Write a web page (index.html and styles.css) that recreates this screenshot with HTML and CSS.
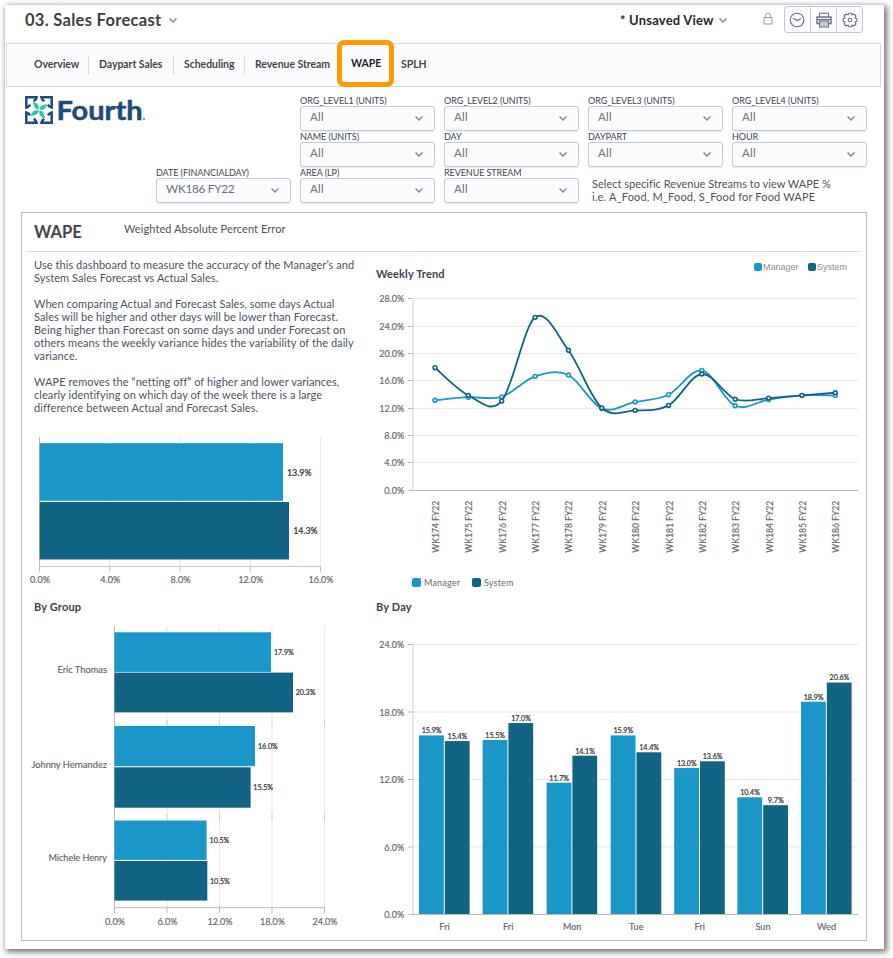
FILE: index.html
```html
<!DOCTYPE html>
<html lang="en">
<head>
<meta charset="utf-8">
<title>Sales Forecast - WAPE</title>
<link rel="stylesheet" href="styles.css">
</head>
<body>
<svg class="defs" width="0" height="0" aria-hidden="true">
  <symbol id="chev" viewBox="0 0 10 7"><path d="M1.5 1.5 5 5 8.5 1.5" fill="none" stroke="currentColor" stroke-width="1.5"/></symbol>
</svg>
<main class="window">
  <header class="topbar">
    <h1 class="title">03. Sales Forecast</h1>
    <svg class="chev title-chev"><use href="#chev"/></svg>
    <span class="view">* Unsaved View</span>
    <svg class="chev view-chev"><use href="#chev"/></svg>
    <svg class="lock" viewBox="0 0 10 13"><path d="M1 5.5H9V12H1ZM2.7 5.5V3.3A2.3 2.3 0 0 1 7.3 3.3V5.5" fill="none" stroke="#959ba3" stroke-width="1"/></svg>
    <div class="tools">
      <span class="tool"><svg viewBox="0 0 18 18"><circle cx="9" cy="9" r="6.8"/><path d="M4.8 7.2 9 9.6 13 7.4"/></svg></span>
      <span class="tool"><svg viewBox="0 0 18 18"><path d="M4.5 6V2.2H13.5V6"/><path d="M4.5 12.5H2V6H16V12.5H13.5M2 8.6H16" stroke-width="1.4"/><path d="M4.5 10H13.5V16H4.5Z" fill="#c3cad3"/></svg></span>
      <span class="tool"><svg viewBox="0 0 18 18"><path d="M7.6 2.2H10.4L11 4 13 3 15 5 14 7 15.9 7.7V10.3L14 11 15 13 13 15 11 14 10.4 15.8H7.6L7 14 5 15 3 13 4 11 2.1 10.3V7.7L4 7 3 5 5 3 7 4Z" stroke-linejoin="round"/><circle cx="9" cy="9" r="1.8"/></svg></span>
    </div>
  </header>

  <nav class="tabs">
    <a class="tab t1">Overview</a>
    <a class="tab t2">Daypart Sales</a>
    <a class="tab t3">Scheduling</a>
    <a class="tab t4">Revenue Stream</a>
    <a class="tab t5 active">WAPE</a>
    <a class="tab t6">SPLH</a>
  </nav>

  <section class="controls">
    <svg class="logo" viewBox="0 0 124 32" width="124" height="32">
      <g fill="none" stroke="#1d4b7d" stroke-width="2.5" stroke-linejoin="miter">
        <path id="corner" d="M10.800 7.200Q13.400 5 13.600 3.300H3.300V13.600Q5 13.400 7.200 10.800"/>
        <use href="#corner" transform="rotate(90 16 16)"/>
        <use href="#corner" transform="rotate(180 16 16)"/>
        <use href="#corner" transform="rotate(270 16 16)"/>
      </g>
      <g fill="#2cc5a4">
        <path id="leaf" d="M15.600 15.600C16.400 11.500 14.500 8.500 9.500 8C10.500 9.500 11 11 11.300 12.500C12 14.500 13.500 15.500 15.600 15.600Z"/>
        <use href="#leaf" transform="rotate(90 16 16)"/>
        <use href="#leaf" transform="rotate(180 16 16)"/>
        <use href="#leaf" transform="rotate(270 16 16)"/>
      </g>
      <text class="wordmark" x="33.500" y="25.500" textLength="86" lengthAdjust="spacingAndGlyphs">Fourth</text>
      <circle cx="121" cy="24.800" r=".9" fill="#1d4b7d"/>
    </svg>
    <div class="filters">
      <label class="filter date"><span>DATE (FINANCIALDAY)</span><b class="select">WK186 FY22<svg class="chev"><use href="#chev"/></svg></b></label>
      <label class="filter c2 r1"><span>ORG_LEVEL1 (UNITS)</span><b class="select">All<svg class="chev"><use href="#chev"/></svg></b></label>
      <label class="filter c3 r1"><span>ORG_LEVEL2 (UNITS)</span><b class="select">All<svg class="chev"><use href="#chev"/></svg></b></label>
      <label class="filter c4 r1"><span>ORG_LEVEL3 (UNITS)</span><b class="select">All<svg class="chev"><use href="#chev"/></svg></b></label>
      <label class="filter c5 r1"><span>ORG_LEVEL4 (UNITS)</span><b class="select">All<svg class="chev"><use href="#chev"/></svg></b></label>
      <label class="filter c2 r2"><span>NAME (UNITS)</span><b class="select">All<svg class="chev"><use href="#chev"/></svg></b></label>
      <label class="filter c3 r2"><span>DAY</span><b class="select">All<svg class="chev"><use href="#chev"/></svg></b></label>
      <label class="filter c4 r2"><span>DAYPART</span><b class="select">All<svg class="chev"><use href="#chev"/></svg></b></label>
      <label class="filter c5 r2"><span>HOUR</span><b class="select">All<svg class="chev"><use href="#chev"/></svg></b></label>
      <label class="filter c2 r3"><span>AREA (LP)</span><b class="select">All<svg class="chev"><use href="#chev"/></svg></b></label>
      <label class="filter c3 r3"><span>REVENUE STREAM</span><b class="select">All<svg class="chev"><use href="#chev"/></svg></b></label>
      <p class="hint">Select specific Revenue Streams to view WAPE %<br><span>i.e. A_Food, M_Food, S_Food for Food WAPE</span></p>
    </div>
  </section>

  <section class="panel">
    <header class="panel-head">
      <h2>WAPE</h2>
      <p>Weighted Absolute Percent Error</p>
    </header>
    <div class="columns">
      <div class="col-left">
        <p class="copy">Use this dashboard to measure the accuracy of the Manager’s and<br>System Sales Forecast vs Actual Sales.<br><br>When comparing Actual and Forecast Sales, some days Actual<br>Sales will be higher and other days will be lower than Forecast.<br>Being higher than Forecast on some days and under Forecast on<br>others means the weekly variance hides the variability of the daily<br>variance.<br><br>WAPE removes the “netting off” of higher and lower variances,<br>clearly identifying on which day of the week there is a large<br>difference between Actual and Forecast Sales.</p>
        <svg id="total" class="chart" viewBox="22 425 348 173" width="348" height="173"></svg>
        <h3>By Group</h3>
        <svg id="group" class="chart" viewBox="22 618 348 320" width="348" height="320"></svg>
      </div>
      <div class="col-right">
        <div class="trend-head">
          <h3>Weekly Trend</h3>
          <div class="legend top"><i class="m"></i><span>Manager</span><i class="s"></i><span>System</span></div>
        </div>
        <svg id="trend" class="chart" viewBox="370 288 496 284" width="496" height="284"></svg>
        <div class="legend bottom"><i class="m"></i><span>Manager</span><i class="s"></i><span>System</span></div>
        <h3>By Day</h3>
        <svg id="day" class="chart" viewBox="370 618 496 320" width="496" height="320"></svg>
      </div>
    </div>
  </section>
</main>
<script src="charts.js"></script>
</body>
</html>
```
FILE: styles.css
```css
* { box-sizing: border-box; }
body { margin: 0; background: #fff; font-family: Lato, "Liberation Sans", sans-serif; color: #4a545f; overflow: hidden; height: 958px; }
h1, h2, h3, p { margin: 0; }
.defs { position: absolute; }
.window { width: 879px; height: 944px; margin: 5px 0 0 5px; background: #fff; box-shadow: 2px 2px 6px 1px rgba(0,0,0,.55); display: flow-root; }
.topbar { height: 38px; display: flex; align-items: flex-start; padding: 0 21px 0 20px; }
.title { font-size: 16.500px; line-height: 20px; margin-top: 5px; width: 143px; font-weight: 700; letter-spacing: .3px; color: #3d4043; white-space: nowrap; }
.chev { width: 10px; height: 7px; color: #7d8b99; flex: none; }
.title-chev { margin-top: 12px; }
.view { margin-left: 442px; margin-top: 5px; width: 96px; font-size: 13px; line-height: 20px; font-weight: 700; letter-spacing: .2px; color: #24272b; white-space: nowrap; }
.view-chev { margin-top: 12px; margin-left: 2px; }
.lock { width: 10px; height: 13px; margin: 7px 0 0 35px; flex: none; }
.tools { display: flex; margin: 1px 0 0 auto; width: 79px; height: 27px; border: 1px solid #bccbdb; border-radius: 3px; background: #fcfcff; flex: none; }
.tool { flex: 1; display: flex; align-items: center; justify-content: center; border-left: 1px solid #c7d4e1; }
.tool:first-child { border-left: 0; }
.tool svg { width: 18px; height: 18px; fill: none; stroke: #67727f; stroke-width: 1.1; }
.tool:first-child svg { margin-left: -1px; }

.tabs { display: flex; align-items: center; height: 44px; margin: 0 3px 0 1px; padding-left: 18px; border: 1px solid #d0dae3; background: #fcfcff; }
.tab { height: 19px; line-height: 16px; padding-left: 10px; font-size: 10.500px; font-weight: 700; letter-spacing: -.05px; color: #41474e; white-space: nowrap; border-right: 1px solid #d3dde6; flex: none; }
.t1 { width: 64px; padding-left: 9px; }
.t2 { width: 85px; }
.t3 { width: 71px; }
.t4 { width: 92px; border: 0; }
.t5, .t6 { border: 0; }
.active { width: 57px; height: 47px; line-height: 37px; margin-top: -3px; border: 5px solid #ff9a05; border-radius: 7px; padding-left: 9px; color: #1f2328; }
.t6 { padding-left: 7px; }

.controls { display: flex; height: 124px; padding-left: 18px; }
.logo { margin: 7px 0 0 0; flex: none; overflow: visible; }
.wordmark { font: 700 26.500px Lato, sans-serif; fill: #1d4b7d; stroke: #1d4b7d; stroke-width: .5px; }
.filters { display: grid; grid-template-columns: repeat(5, 135px); grid-template-rows: repeat(3, 36px); column-gap: 9px; margin: 8px 0 0 9px; }
.filter { display: flex; flex-direction: column; font-size: 9px; line-height: 12px; color: #3f444a; }
.filter > span { height: 11px; white-space: nowrap; letter-spacing: -.07px; }
.date { grid-area: 3 / 1; }
.c2 { grid-column: 2; } .c3 { grid-column: 3; } .c4 { grid-column: 4; } .c5 { grid-column: 5; }
.r1 { grid-row: 1; } .r2 { grid-row: 2; } .r3 { grid-row: 3; }
.select { display: flex; justify-content: space-between; align-items: center; height: 25px; padding: 0 10px 3px 9px; font-size: 11.500px; font-weight: 400; letter-spacing: .3px; color: #65717e; border: 1px solid #bccddd; border-radius: 3px; background: #fcfcff; box-shadow: 0 1px 0 rgba(188,205,221,.35); }
.date .select { letter-spacing: -.3px; font-size: 11.800px; }
.select .chev { position: relative; top: 1px; }
.hint { grid-area: 3 / 4 / 4 / 6; padding: 10px 0 0 4px; font-size: 11px; line-height: 13px; letter-spacing: .02px; white-space: nowrap; }
.hint span { letter-spacing: .17px; }

.panel { width: 846px; height: 729px; margin: 1px 0 0 16px; border: 1px solid #b9bbbd; }
.panel-head { display: flex; height: 39px; margin: 0 6px 0 5px; border-bottom: 1px solid #d5dde3; padding-left: 7px; }
h2 { width: 90px; font-size: 16.500px; line-height: 20px; margin-top: 9px; color: #3f464e; }
.panel-head p { font-size: 11px; line-height: 13px; margin-top: 9px; letter-spacing: .08px; }
.columns { display: flex; }
.col-left { width: 348px; flex: none; }
.col-right { width: 496px; flex: none; }
.copy { height: 173px; padding: 6px 0 0 12px; font-size: 11px; line-height: 13px; letter-spacing: .065px; white-space: nowrap; }
.chart { display: block; font-family: Lato, sans-serif; }
h3 { height: 20px; line-height: 18px; padding-left: 12px; font-size: 11px; color: #3b434c; letter-spacing: .15px; }
.col-right h3 { padding-left: 6px; }
.trend-head { display: flex; justify-content: space-between; height: 36px; }
.trend-head h3 { margin-top: 13px; }
.legend { display: flex; align-items: center; height: 10px; font-size: 9px; line-height: 10px; color: #6b6b6b; letter-spacing: .18px; }
.legend i { width: 9px; height: 9px; border-radius: 2px; flex: none; }
.legend .m { background: #1a96c8; } .legend .s { background: #116484; }
.legend.top { margin: 10px 19px 0 0; color: #8b8b8b; font-family: "Liberation Sans", sans-serif; letter-spacing: 0; }
.legend.top i { width: 8px; height: 8px; }
.legend.top span { margin-left: 1px; width: 45px; } .legend.top span:last-child { width: 30px; }
.legend.bottom { height: 26px; padding: 0 0 5px 42px; }
.legend.bottom span { margin-left: 3px; width: 48px; }
.axis { fill: #666; font-size: 9px; stroke: #666; stroke-width: .15px; }
.val { fill: #303030; stroke: #303030; stroke-width: .2px; }
```
FILE: charts.js
```js
const NS = 'http://www.w3.org/2000/svg';
const BLUE = '#1a96c8', NAVY = '#116484';

function add(svg, tag, attrs, text) {
  const el = document.createElementNS(NS, tag);
  for (const k in attrs) el.setAttribute(k, attrs[k]);
  if (text !== undefined) el.textContent = text;
  svg.appendChild(el);
  return el;
}
const line = (s, x1, y1, x2, y2, c) => add(s, 'line', { x1, y1, x2, y2, stroke: c, 'stroke-width': 1 });
const rect = (s, x, y, w, h, c) => add(s, 'rect', { x, y, width: w, height: h, fill: c });
function label(s, x, y, text, len, anchor, cls, size, extra) {
  add(s, 'text', Object.assign({ x, y: y + size * 0.36, 'text-anchor': anchor, class: cls,
    textLength: len, lengthAdjust: 'spacingAndGlyphs', style: `font-size:${size}px` }, extra), text);
}
const GRID = '#e9e9e9', AXIS = '#b9b9b9';

// Totals
{
  const s = document.getElementById('total');
  ['0.0%', '4.0%', '8.0%', '12.0%', '16.0%'].forEach((t, i) => {
    const x = 39.5 + i * 70.25;
    line(s, x, 437, x, 566, i ? GRID : AXIS);
    line(s, x, 566, x, 571.5, AXIS);
    label(s, x + 0.5, 579.5, t, t.length > 4 ? 25 : 20, 'middle', 'axis', 9);
  });
  line(s, 39, 566.5, 321, 566.5, '#c9c9c9');
  rect(s, 39.7, 443.2, 243.3, 57.6, BLUE);
  rect(s, 39.7, 502, 249.3, 57.5, NAVY);
  label(s, 287, 472.5, '13.9%', 24.5, 'start', 'val', 9);
  label(s, 293.2, 531, '14.3%', 24.5, 'start', 'val', 9);
}

// By group
{
  const s = document.getElementById('group');
  ['0.0%', '6.0%', '12.0%', '18.0%', '24.0%'].forEach((t, i) => {
    const x = 114.5 + i * 52.5;
    line(s, x, 626, x, 908, i ? GRID : AXIS);
    line(s, x, 908, x, 913, AXIS);
    if (i) { line(s, x, 719.5, x, 725.5, '#d2d2d2'); line(s, x, 814, x, 820, '#d2d2d2'); }
    label(s, x + 0.5, 922, t, t.length > 4 ? 25 : 20, 'middle', 'axis', 9);
  });
  line(s, 114, 907.7, 325, 907.7, '#bcbcbc');
  [
    ['Eric Thomas', 669.7, 49.5, 632.3, 39.6, 271, '17.9%', 672.6, 39.8, 293, '20.3%'],
    ['Johnny Hernandez', 764.3, 75.5, 726, 40.2, 255, '16.0%', 767.3, 40.4, 250.6, '15.5%'],
    ['Michele Henry', 858, 58.5, 820.5, 39.4, 206.6, '10.5%', 861, 39.6, 207.3, '10.5%']
  ].forEach(([name, ny, nl, y1, h1, e1, v1, y2, h2, e2, v2]) => {
    label(s, 107, ny, name, nl, 'end', 'axis', 9);
    rect(s, 114.5, y1, e1 - 114.5, h1, BLUE);
    rect(s, 114.5, y2, e2 - 114.5, h2, NAVY);
    label(s, e1 + 3, y1 + h1 / 2 + 0.3, v1, 19.7, 'start', 'val', 7.3);
    label(s, e2 + 2.7, y2 + h2 / 2 + 0.3, v2, 19.7, 'start', 'val', 7.3);
  });
}

// Weekly trend
{
  const s = document.getElementById('trend');
  [298.5, 326.5, 353.5, 380.5, 408.5, 435.5, 462.5, 490.5].forEach((y, i) => {
    const v = 28 - i * 4;
    line(s, 408, y, 413, y, AXIS);
    line(s, 413, y, 858, y, v ? GRID : AXIS);
    label(s, 404.3, y + 0.3, v.toFixed(1) + '%', v > 9 ? 25 : 20, 'end', 'axis', 9);
  });
  line(s, 413, 298, 413, 491, '#cfcfcf');
  const series = [
    [BLUE, [13.15, 13.6, 13.65, 16.63, 16.83, 11.95, 12.9, 13.96, 17.5, 12.35, 13.25, 13.87, 13.83]],
    [NAVY, [17.9, 13.87, 13.05, 25.25, 20.44, 12.02, 11.67, 12.4, 16.98, 13.3, 13.47, 13.87, 14.25]]
  ];
  for (const [color, vals] of series) {
    const p = vals.map((v, i) => [435 + i * 33.36, 490.4 - v * 6.854]);
    let d = `M${p[0]}`;
    for (let i = 0; i < p.length - 1; i++) {
      const a = p[i - 1] || p[i], b = p[i], c = p[i + 1], e = p[i + 2] || c;
      d += `C${b[0] + (c[0] - a[0]) / 6} ${b[1] + (c[1] - a[1]) / 6} ${c[0] - (e[0] - b[0]) / 6} ${c[1] - (e[1] - b[1]) / 6} ${c[0]} ${c[1]}`;
    }
    add(s, 'path', { d, fill: 'none', stroke: color, 'stroke-width': 1.8 });
    p.forEach(([cx, cy]) => add(s, 'circle', { cx, cy, r: 1.9, fill: '#fff', stroke: color, 'stroke-width': 1.6 }));
  }
  for (let i = 0; i < 13; i++) {
    const x = 435.8 + i * 33.36, y = 526.7;
    label(s, x, y, `WK${174 + i} FY22`, 52, 'middle', 'axis', 9, { transform: `rotate(-90 ${x} ${y})` });
  }
}

// By day
{
  const s = document.getElementById('day');
  [644.5, 712, 779.5, 847, 914.5].forEach((y, i) => {
    const v = 24 - i * 6;
    line(s, 408, y, 413, y, AXIS);
    line(s, 413, y, 858, y, GRID);
    label(s, 404.3, y + 0.3, v.toFixed(1) + '%', v > 9 ? 25 : 20, 'end', 'axis', 9);
  });
  line(s, 413, 644, 413, 915, '#cfcfcf');
  [
    ['Fri', 15.9, 15.4, 419, 10.5], ['Fri', 15.5, 17.0, 482.6, 10.5], ['Mon', 11.7, 14.1, 546.6, 18.3],
    ['Tue', 15.9, 14.4, 610.7, 14.5], ['Fri', 13.0, 13.6, 674.2, 10.5], ['Sun', 10.4, 9.7, 737.4, 15],
    ['Wed', 18.9, 20.6, 801, 19]
  ].forEach(([d, a, b, x, len]) => {
    [[a, x, BLUE], [b, x + 25.8, NAVY]].forEach(([v, bx, c]) => {
      const top = 914.3 - v * 11.25;
      rect(s, bx, top, 24.8, 914.3 - top, c);
      label(s, bx + 12.6, top - 4.8, v.toFixed(1) + '%', v > 9.95 ? 19.7 : 16, 'middle', 'val', 7.3);
    });
    label(s, x + 25.6, 926.8, d, len, 'middle', 'axis', 9);
  });
  line(s, 408, 914.5, 858, 914.5, AXIS);
}
```
